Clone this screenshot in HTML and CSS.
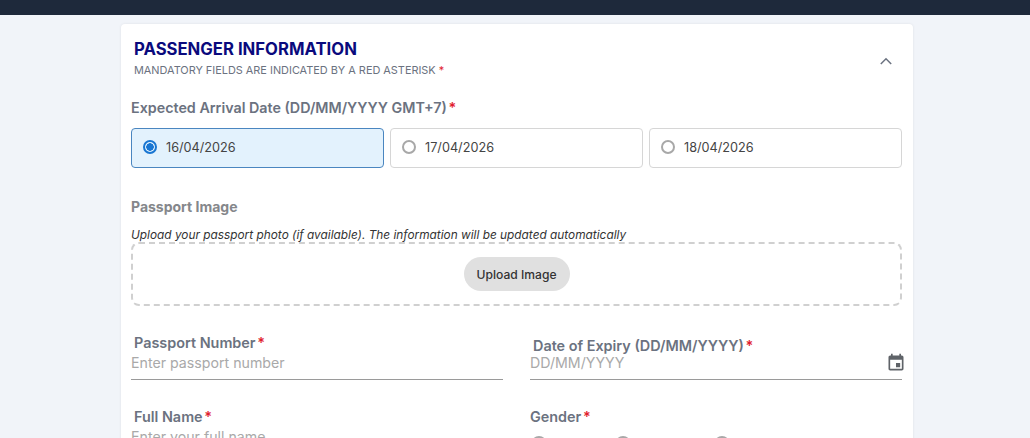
FILE: index.html
```html
<!DOCTYPE html>
<html lang="en">
<head>
    <meta charset="UTF-8">
    <meta name="viewport" content="width=device-width, initial-scale=1.0">
    <title>Passenger Information</title>
    <link rel="stylesheet" href="styles.css">
</head>
<body>
    <div class="topbar"></div>

    <main class="card">
        <header class="card-header">
            <div>
                <h1>PASSENGER INFORMATION</h1>
                <p class="mandatory">MANDATORY FIELDS ARE INDICATED BY A RED ASTERISK <span class="req">*</span></p>
            </div>
            <svg class="chevron" width="24" height="24" viewBox="0 0 24 24"><path d="M6.800 15 12 9.800l5.200 5.200" fill="none" stroke="#6b7280" stroke-width="1.500"/></svg>
        </header>

        <div class="arrival-label">Expected Arrival Date (DD/MM/YYYY GMT+7) <span class="req">*</span></div>
        <div class="date-options">
            <label class="date-option selected"><span class="radio"></span>16/04/2026</label>
            <label class="date-option"><span class="radio"></span>17/04/2026</label>
            <label class="date-option"><span class="radio"></span>18/04/2026</label>
        </div>

        <div class="image-label">Passport Image</div>
        <p class="image-hint">Upload your passport photo (if available). The information will be updated automatically</p>
        <div class="dropzone">
            <button class="upload-btn">Upload Image</button>
        </div>

        <div class="field-grid">
            <div class="field">
                <div class="field-label">Passport Number <span class="req">*</span></div>
                <div class="field-input">Enter passport number</div>
            </div>
            <div class="field expiry">
                <div class="field-label">Date of Expiry (DD/MM/YYYY) <span class="req">*</span></div>
                <div class="field-input">DD/MM/YYYY
                    <svg class="calendar" width="20" height="20" viewBox="0 0 24 24"><path d="M17 12h-5v5h5v-5zM16 1v2H8V1H6v2H5c-1.100 0-2 .9-2 2v14c0 1.100.9 2 2 2h14c1.100 0 2-.9 2-2V5c0-1.100-.9-2-2-2h-1V1h-2zm3 18H5V8h14v11z" fill="#5f6368"/></svg>
                </div>
            </div>
            <div class="field">
                <div class="field-label">Full Name <span class="req">*</span></div>
                <div class="field-input">Enter your full name</div>
            </div>
            <div class="field gender">
                <div class="field-label">Gender <span class="req">*</span></div>
                <div class="gender-options">
                    <span class="radio"></span>
                    <span class="radio"></span>
                    <span class="radio"></span>
                </div>
            </div>
        </div>
    </main>
</body>
</html>
```

FILE: styles.css
```css
/* General Styling */
html, body {
    height: 438px;
    overflow: hidden;
}

body {
    margin: 0;
    font-family: Inter, "Noto Sans", sans-serif;
    background-color: #f1f4f9;
    color: #333;
}

.topbar {
    height: 15px;
    background-color: #1e293b;
}

.req {
    margin-left: -2px;
    color: #e11d2e;
}

/* Card */
.card {
    width: 771px;
    margin: 9px 0 0 121px;
    padding: 0 11px 20px 10px;
    background-color: #fff;
    border-radius: 4px;
    box-shadow: 0 0 3px rgba(0, 0, 0, 0.08);
}

.card-header {
    display: flex;
    justify-content: space-between;
    align-items: center;
    padding: 16px 4px 0 3px;
}

.card-header h1 {
    margin: 0;
    font-size: 16.700px;
    line-height: 19px;
    font-weight: 700;
    color: #0a0a7d;
}

.mandatory {
    margin: 5px 0 0;
    font-size: 10.900px;
    line-height: 13px;
    color: #6b7280;
}

.mandatory .req {
    margin-left: 0;
}

.chevron {
    margin-top: 5px;
}

/* Arrival Date */
.arrival-label {
    margin-top: 22px;
    font-size: 14.300px;
    line-height: 17px;
    font-weight: 600;
    color: #6b7280;
}

.date-options {
    display: grid;
    grid-template-columns: repeat(3, 1fr);
    gap: 6px;
    margin-top: 12px;
}

.date-option {
    box-sizing: border-box;
    display: flex;
    align-items: center;
    gap: 9px;
    height: 40px;
    padding: 0 0 2px 11px;
    border: 1px solid #d6d6d6;
    border-radius: 4px;
    font-size: 12.700px;
    color: #444;
}

.date-option.selected {
    border-color: #4a86c0;
    background-color: #e3f2fd;
}

.radio {
    box-sizing: border-box;
    width: 14px;
    height: 14px;
    border: 2px solid #a8a8a8;
    border-radius: 50%;
    flex-shrink: 0;
}

.selected .radio {
    border-color: #1976d2;
    background: radial-gradient(circle, #1976d2 0 3.500px, transparent 4px);
}

/* Passport Image */
.image-label {
    margin-top: 30px;
    font-size: 14px;
    line-height: 17px;
    font-weight: 700;
    color: #85878b;
}

.image-hint {
    margin: 13px 0 0;
    font-size: 11.850px;
    line-height: 14px;
    font-style: italic;
    color: #333;
}

.dropzone {
    display: flex;
    justify-content: center;
    align-items: center;
    height: 60px;
    border: 2px dashed #d0d0d0;
    border-radius: 8px;
}

.upload-btn {
    width: 106px;
    height: 34px;
    border: none;
    border-radius: 17px;
    background-color: #e0e0e0;
    font-family: inherit;
    font-size: 12.100px;
    font-weight: 500;
    color: #333;
}

/* Form Fields */
.field-grid {
    display: grid;
    grid-template-columns: 372px 372px;
    column-gap: 27px;
    margin-top: 28px;
}

.field {
    height: 74px;
}

.field-label {
    padding-left: 3px;
    font-size: 14.400px;
    line-height: 17px;
    font-weight: 600;
    color: #6b7280;
}

.field-input {
    box-sizing: border-box;
    display: flex;
    justify-content: space-between;
    align-items: center;
    height: 29px;
    padding-bottom: 5px;
    border-bottom: 1px solid #9a9a9a;
    font-size: 14.200px;
    color: #a9a9a9;
}

.expiry .field-label {
    padding: 3px 0 0 3px;
}

.expiry .field-input {
    margin-top: -3px;
}

.calendar {
    margin-right: -4px;
}

.gender .field-label {
    padding-left: 0;
}

.gender-options {
    display: flex;
    gap: 68px;
    margin-top: 11px;
    padding-left: 1px;
}

.gender-options .radio {
    width: 16px;
    height: 16px;
}

.gender-options .radio:last-child {
    margin-left: 15px;
}
```
